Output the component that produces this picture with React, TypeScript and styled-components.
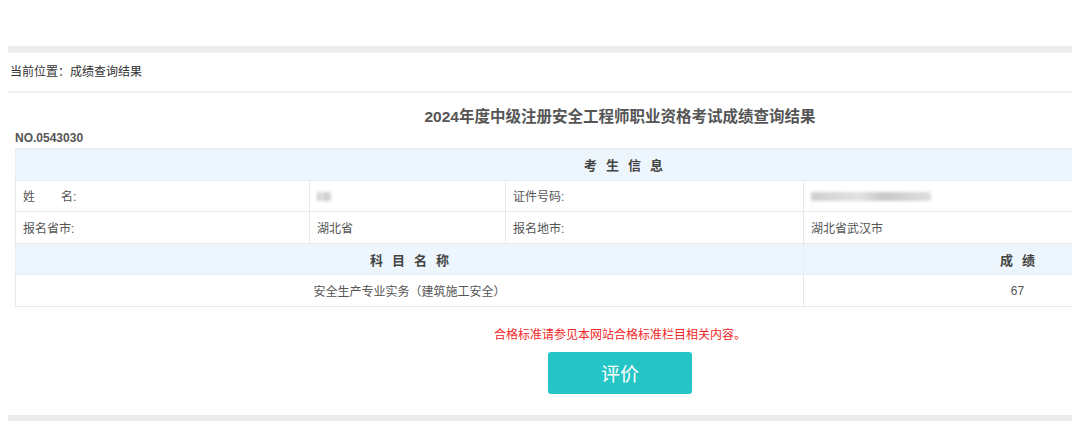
import styled, { createGlobalStyle } from "styled-components";

const GlobalStyle = createGlobalStyle`
  html, body {
    margin: 0;
    padding: 0;
    background: #fff;
    font-family: "Liberation Sans", "Noto Sans CJK SC", sans-serif;
  }
`;

const Page = styled.div`
  width: 1080px;
  height: 422px;
  overflow: hidden;
  padding-top: 46px;
  box-sizing: border-box;
`;

const Frame = styled.div`
  margin-left: 8px;
  width: 1064px;
  overflow: hidden;
`;

const TopBar = styled.div`
  height: 6px;
  background: #ececec;
  border-bottom: 1px solid #f4f4f4;
`;

const Crumb = styled.div`
  height: 38px;
  line-height: 38px;
  padding-left: 2px;
  font-size: 12px;
  color: #333;
  border-bottom: 2px solid #f0f0f0;
`;

const Content = styled.div`
  width: 1224px;
`;

const Title = styled.h1`
  margin: 13px 0 0;
  text-align: center;
  font-size: 15.5px;
  line-height: 22px;
  font-weight: bold;
  color: #555;
`;

const Serial = styled.div`
  margin: 2px 0 0 7px;
  font-size: 12px;
  line-height: 16px;
  font-weight: bold;
  color: #555;
`;

const Table = styled.table`
  margin: 2px 0 0 7px;
  width: 1216px;
  border-collapse: collapse;
  table-layout: fixed;
  font-size: 12px;
  color: #555;
`;

const Cell = styled.td<{ $center?: boolean }>`
  height: 30.6px;
  padding: 0 0 0 ${(p) => (p.$center ? 0 : 7)}px;
  border: 1px solid #e6e9ec;
  text-align: ${(p) => (p.$center ? "center" : "left")};
`;

const HeadCell = styled.th`
  height: 30.6px;
  padding: 0;
  background: #eef6fd;
  border: 1px solid #e6eef5;
  font-size: 13px;
  font-weight: bold;
  color: #444;
  letter-spacing: 9px;
  text-indent: 9px;
`;

const Gap = styled.span`
  display: inline-block;
  width: 26px;
`;

const Blur = styled.span<{ $w: number }>`
  display: inline-block;
  vertical-align: middle;
  width: ${(p) => p.$w}px;
  height: 9px;
  background: linear-gradient(90deg, #cfcfcf, #e2e2e2 40%, #c9c9c9 60%, #dedede);
  filter: blur(1.5px);
`;

const Footer = styled.div`
  display: flex;
  flex-direction: column;
  align-items: center;
  padding-top: 20px;
`;

const Note = styled.div`
  font-size: 12px;
  line-height: 16px;
  color: #f02828;
`;

const Button = styled.button`
  margin-top: 9px;
  width: 144px;
  height: 42px;
  border: none;
  border-radius: 3px;
  background: #26c5c5;
  color: #fff;
  font-family: inherit;
  font-size: 19px;
`;

const BottomBar = styled.div`
  margin: 21px 8px 0;
  height: 6px;
  background: #ececec;
`;

export default function App() {
  return (
    <Page>
      <GlobalStyle />
      <Frame>
        <TopBar />
        <Crumb>当前位置：成绩查询结果</Crumb>
        <Content>
          <Title>2024年度中级注册安全工程师职业资格考试成绩查询结果</Title>
          <Serial>NO.0543030</Serial>
          <Table>
            <colgroup>
              <col style={{ width: 294 }} />
              <col style={{ width: 196 }} />
              <col style={{ width: 298 }} />
              <col style={{ width: 428 }} />
            </colgroup>
            <tbody>
              <tr>
                <HeadCell colSpan={4}>考生信息</HeadCell>
              </tr>
              <tr>
                <Cell>
                  姓<Gap />名:
                </Cell>
                <Cell>
                  <Blur $w={14} />
                </Cell>
                <Cell>证件号码:</Cell>
                <Cell>
                  <Blur $w={120} />
                </Cell>
              </tr>
              <tr>
                <Cell>报名省市:</Cell>
                <Cell>湖北省</Cell>
                <Cell>报名地市:</Cell>
                <Cell>湖北省武汉市</Cell>
              </tr>
              <tr>
                <HeadCell colSpan={3}>科目名称</HeadCell>
                <HeadCell>成绩</HeadCell>
              </tr>
              <tr>
                <Cell colSpan={3} $center>
                  安全生产专业实务（建筑施工安全）
                </Cell>
                <Cell $center>67</Cell>
              </tr>
            </tbody>
          </Table>
          <Footer>
            <Note>合格标准请参见本网站合格标准栏目相关内容。</Note>
            <Button>评价</Button>
          </Footer>
        </Content>
      </Frame>
      <BottomBar />
    </Page>
  );
}
